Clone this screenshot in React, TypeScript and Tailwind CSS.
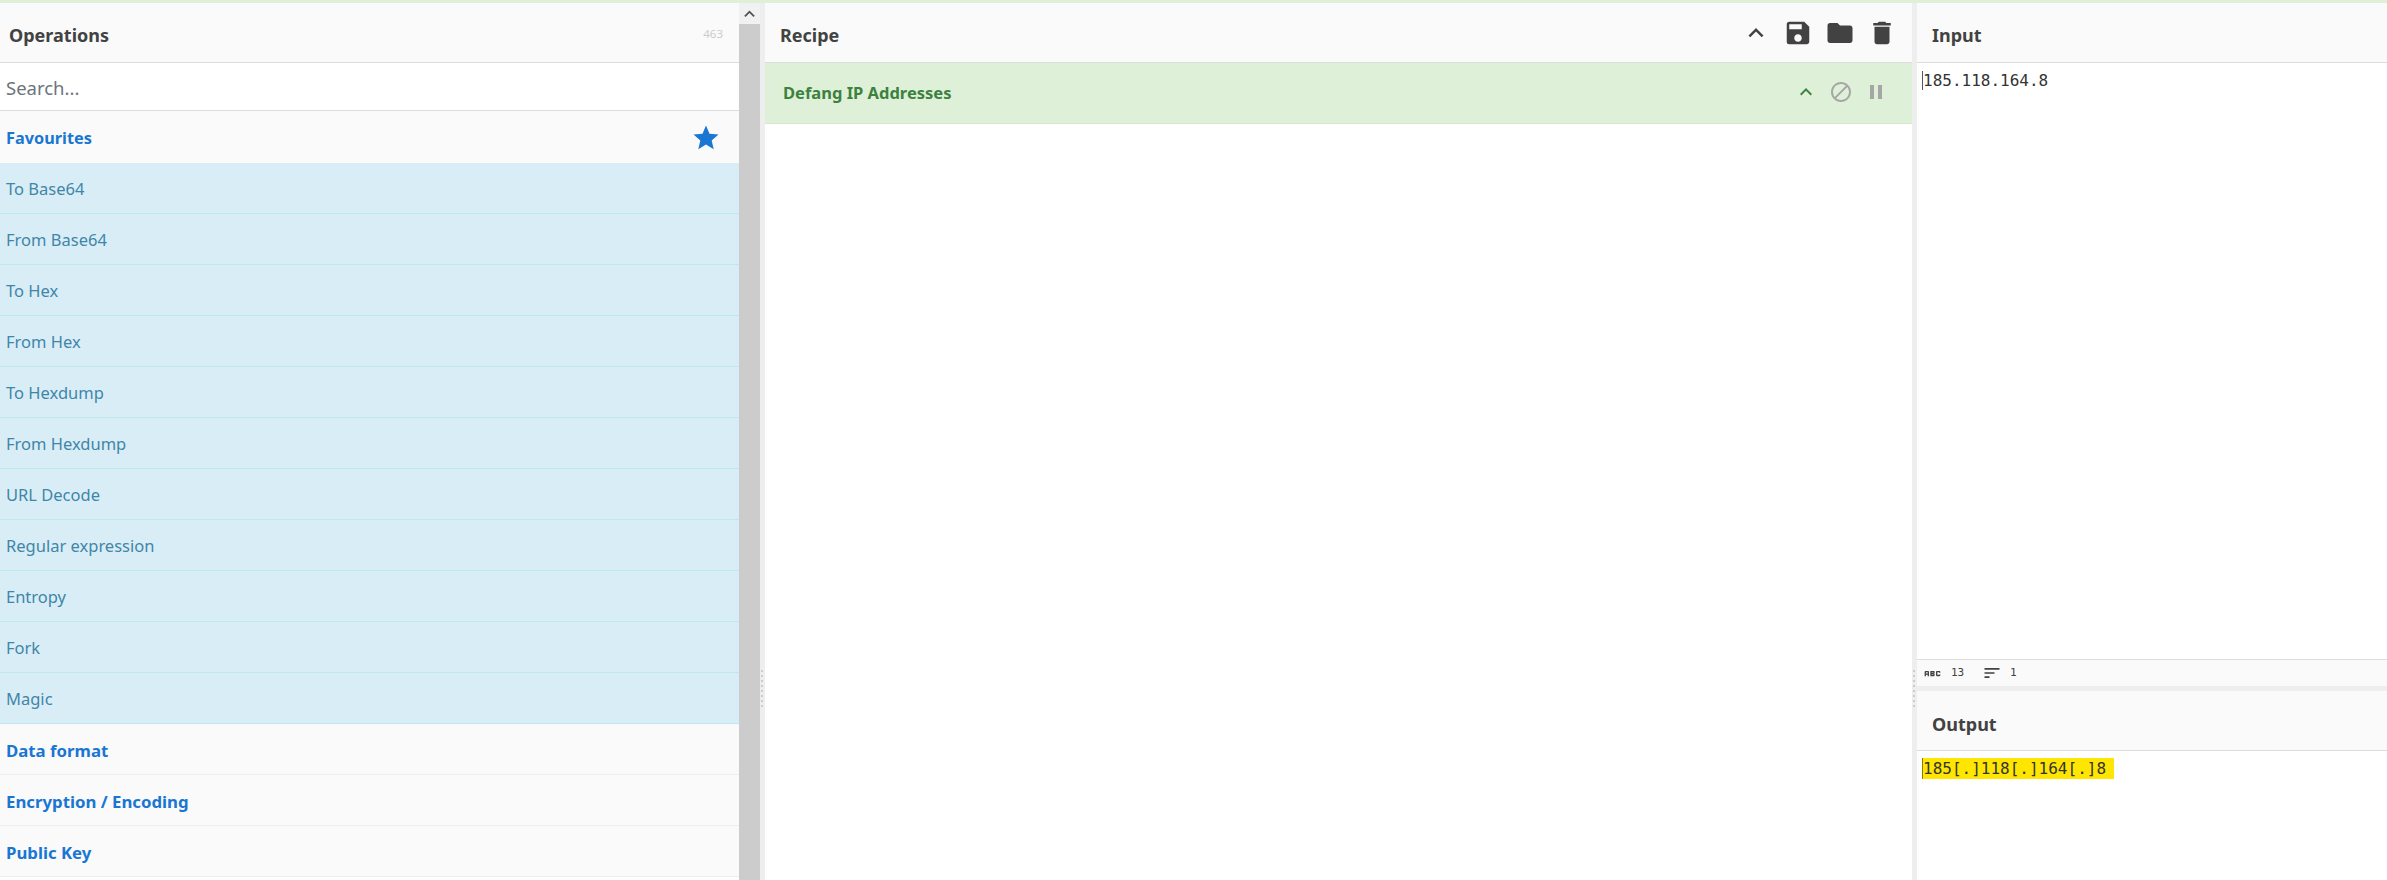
import React from 'react'
import {
  MdAbc,
  MdBlock,
  MdDelete,
  MdFolder,
  MdKeyboardArrowUp,
  MdPause,
  MdSave,
  MdSort,
  MdStar,
} from 'react-icons/md'

const FAVOURITES = [
  'To Base64',
  'From Base64',
  'To Hex',
  'From Hex',
  'To Hexdump',
  'From Hexdump',
  'URL Decode',
  'Regular expression',
  'Entropy',
  'Fork',
  'Magic',
]

const CATEGORIES = ['Data format', 'Encryption / Encoding', 'Public Key']

const SANS = "font-['Noto_Sans','Open_Sans',sans-serif]"
const MONO = "font-['DejaVu_Sans_Mono',monospace]"

const PaneHeader = ({
  title,
  titleClass = 'pt-[5px]',
  children,
}: {
  title: string
  titleClass?: string
  children?: React.ReactNode
}) => (
  <div className="h-[60px] shrink-0 flex items-center justify-between bg-[#fafafa] border-b border-[#dddddd]">
    <span className={`pl-[15px] text-[18px] font-bold text-[#424242] ${titleClass}`}>{title}</span>
    {children}
  </div>
)

const Operations = () => (
  <div className="w-[739px] shrink-0 flex flex-col">
    <div className="h-[60px] shrink-0 flex items-center justify-between bg-[#fafafa] border-b border-[#dddddd]">
      <span className="pl-[9px] pt-[5px] text-[18px] font-bold text-[#424242]">Operations</span>
      <span className="pr-4 pt-[3px] text-[11.5px] text-[#cccccc]">463</span>
    </div>
    <div className="h-[48px] shrink-0 flex items-center pl-[6px] pt-[2px] bg-white border-b border-[#dddddd] text-[18.5px] text-[#6c757d]">
      Search...
    </div>
    <div className="h-[2px] shrink-0 bg-[#fafafa]" />
    <div className="h-[50px] shrink-0 flex items-center justify-between pl-[6px] pr-[18px] bg-[#fafafa] text-[16.3px] font-bold text-[#1976d2]">
      <span className="pt-[1px]">Favourites</span>
      <MdStar size={30} />
    </div>
    {FAVOURITES.map((name) => (
      <div
        key={name}
        className="h-[51px] shrink-0 flex items-center pl-[6px] pt-[3px] bg-[#d9edf7] border-b border-[#bce8f1] text-[16.5px] text-[#3f86a8]"
      >
        {name}
      </div>
    ))}
    {CATEGORIES.map((name) => (
      <div
        key={name}
        className="h-[51px] shrink-0 flex items-center pl-[6px] pt-[3px] bg-[#fafafa] border-b border-[#eeeeee] text-[16.8px] font-bold text-[#1976d2]"
      >
        {name}
      </div>
    ))}
  </div>
)

const Scrollbar = () => (
  <div className="w-[21px] shrink-0 flex flex-col bg-[#cccccc]">
    <div className="h-[21px] flex items-center justify-center bg-[#f1f1f1] text-[#505050]">
      <MdKeyboardArrowUp size={22} />
    </div>
  </div>
)

const Gutter = ({ gripClass }: { gripClass: string }) => (
  <div className="relative w-[5px] shrink-0 bg-[#eeeeee]">
    <div className={`absolute left-[1px] w-[2px] h-[38px] ${gripClass} bg-[repeating-linear-gradient(to_bottom,#cccccc_0,#cccccc_2px,transparent_2px,transparent_5px)]`} />
  </div>
)

const Recipe = () => (
  <div className="flex-1 min-w-0 flex flex-col bg-white">
    <PaneHeader title="Recipe">
      <div className="flex items-center pr-[9px] pt-[1px] text-[#424242]">
        <span className="w-[42px] flex justify-center -ml-[2px]"><MdKeyboardArrowUp size={30} /></span>
        <span className="w-[42px] flex justify-center"><MdSave size={30} /></span>
        <span className="w-[42px] flex justify-center"><MdFolder size={30} /></span>
        <span className="w-[42px] flex justify-center"><MdDelete size={30} /></span>
      </div>
    </PaneHeader>
    <div className="h-[61px] shrink-0 flex items-center justify-between pl-[18px] pr-[19px] bg-[#dff0d8] border-b border-[#d6e9c6]">
      <span className="text-[16.5px] font-bold text-[#3c813f]">Defang IP Addresses</span>
      <div className="flex items-center -mt-[2px]">
        <span className="w-[35px] flex justify-center text-[#3c813f]"><MdKeyboardArrowUp size={24} /></span>
        <span className="w-[35px] flex justify-center text-[#a6a6a6]"><MdBlock size={24} /></span>
        <span className="w-[35px] flex justify-center text-[#a6a6a6]"><MdPause size={24} /></span>
      </div>
    </div>
  </div>
)

const InputOutput = () => (
  <div className="flex-1 min-w-0 flex flex-col bg-white">
    <PaneHeader title="Input" />
    <div className={`h-[596px] shrink-0 pt-[6px] pl-[5px] text-[16px] leading-[24px] text-[#333333] ${MONO}`}>
      <span className="border-l border-[#555555]">185.118.164.8</span>
    </div>
    <div className={`h-[27px] shrink-0 flex items-center pl-[5px] bg-[#fafafa] border-t border-[#dddddd] text-[11px] text-[#424242] ${MONO}`}>
      <MdAbc size={21} />
      <span className="ml-[8px] w-[14px]">13</span>
      <MdSort size={20} className="ml-[17px]" />
      <span className="ml-[8px]">1</span>
    </div>
    <div className="h-[5px] shrink-0 bg-[#eeeeee]" />
    <PaneHeader title="Output" titleClass="pt-[7px]" />
    <div className={`pt-[7px] pl-[5px] text-[16px] leading-[21px] text-[#333333] ${MONO}`}>
      <span className="inline-block w-[192px] h-[21px] bg-[#ffe600] border-l border-[#8a7d00]">185[.]118[.]164[.]8</span>
    </div>
  </div>
)

const App = () => (
  <div className={`h-[880px] w-[2387px] overflow-hidden flex flex-col bg-white ${SANS}`}>
    <div className="h-[3px] shrink-0 bg-[#dff0d8]" />
    <div className="flex-1 min-h-0 flex">
      <Operations />
      <Scrollbar />
      <Gutter gripClass="top-[667px]" />
      <Recipe />
      <Gutter gripClass="top-[667px]" />
      <div className="w-[470px] shrink-0 flex flex-col">
        <InputOutput />
      </div>
    </div>
  </div>
)

export default App
